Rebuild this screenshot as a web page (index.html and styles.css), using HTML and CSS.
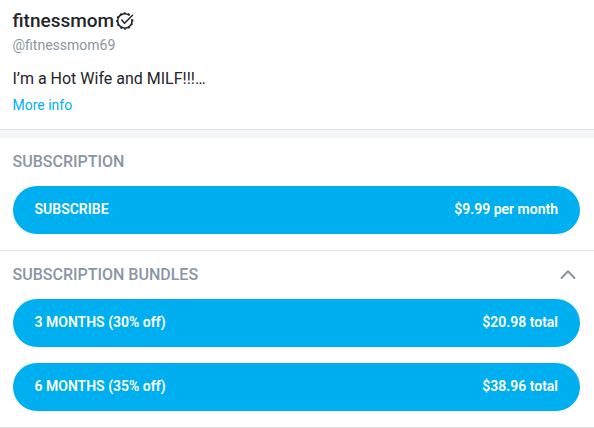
FILE: index.html
```html
<!DOCTYPE html>
<html lang="en">
<head>
<meta charset="utf-8">
<title>fitnessmom</title>
<link rel="stylesheet" href="styles.css">
</head>
<body>
<header class="profile">
  <h1 class="name"><span>fitnessmom</span><svg class="verified" viewBox="0 0 20 20"><path d="M14.100 4.150A7.200 7.200 0 1 0 16.900 8.700"/><path class="scallops" pathLength="21" d="M14.700 3.700A8 8 0 1 0 17.600 8.400"/><path d="M6.800 9.100L9.500 12.200L17.500 4.200"/></svg></h1>
  <div class="handle">@fitnessmom69</div>
  <p class="bio">I’m a Hot Wife and MILF!!!…</p>
  <a class="more">More info</a>
</header>
<section class="section">
  <h2 class="title">SUBSCRIPTION</h2>
  <button class="plan"><span>SUBSCRIBE</span><span>$9.99 per month</span></button>
</section>
<section class="section bundles">
  <h2 class="title"><span>SUBSCRIPTION BUNDLES</span><svg class="chevron" viewBox="0 0 24 24"><path d="M5.500 16l6.500-6.800 6.500 6.800"/></svg></h2>
  <button class="plan"><span>3 MONTHS (30% off)</span><span>$20.98 total</span></button>
  <button class="plan"><span>6 MONTHS (35% off)</span><span>$38.96 total</span></button>
</section>
</body>
</html>
```
FILE: styles.css
```css
* { box-sizing: border-box; }
body { margin: 0; background: #fff; color: #242529; font-family: Roboto, sans-serif; overflow: hidden; }
.profile { height: 138px; padding: 9px 12.5px 0; border-bottom: 8px solid #f5f6f8; box-shadow: inset 0 -1px #e0e1e2; }
.name { display: flex; align-items: center; gap: 1px; margin: 0; font-size: 19px; line-height: 24px; font-weight: 500; }
.verified { width: 20px; height: 20px; overflow: visible; }
.verified, .chevron { fill: none; stroke: currentColor; stroke-width: 1.5; stroke-linecap: round; stroke-linejoin: round; }
.verified .scallops { stroke-width: 1.3; stroke-linecap: butt; stroke-dasharray: 1 1; }
.handle { margin-top: 2px; font-size: 14px; line-height: 20px; color: #8a96a3; }
.bio { margin: 12px 0 0; font-size: 16px; line-height: 24px; }
.more { display: block; margin-top: 4px; font-size: 14px; line-height: 20px; color: #00aff0; }
.section { padding: 11px 14px 16px 13px; border-bottom: 1px solid #e0e1e2; }
.title { display: flex; justify-content: space-between; align-items: center; height: 24px; margin: 0 0 13px -0.5px; font-size: 16px; font-weight: 500; color: #8a96a3; }
.chevron { width: 24px; height: 24px; stroke-width: 2; }
.plan { display: flex; justify-content: space-between; align-items: center; width: 100%; height: 48px; padding: 0 22px 1px 21.500px; border: 0; border-radius: 24px; background: #00aff0; color: #fff; font: 600 14px/19px Roboto, sans-serif; }
.plan + .plan { margin-top: 16px; }
```
